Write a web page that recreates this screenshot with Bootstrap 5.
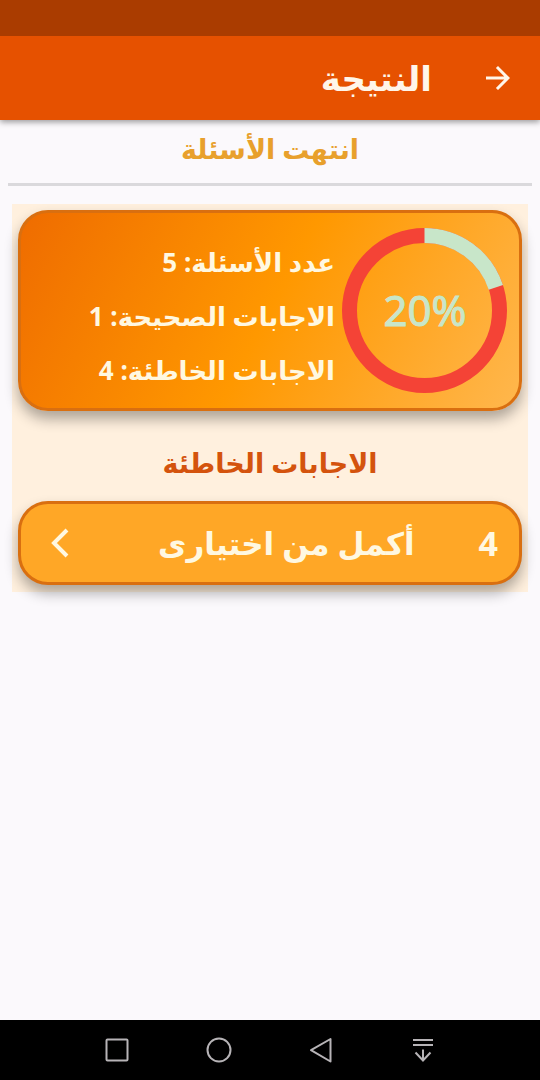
<!DOCTYPE html>
<html lang="ar" dir="rtl">
<head>
<meta charset="utf-8">
<meta name="viewport" content="width=device-width, initial-scale=1">
<title>النتيجة</title>
<link href="https://cdn.jsdelivr.net/npm/bootstrap@5.3.0/dist/css/bootstrap.min.css" rel="stylesheet">
<style>
  body { background: #fbf9fc; font-family: "Noto Sans", "DejaVu Sans", sans-serif; }
  .status-strip { height: 36px; background: #aa3c00; }
  .app-bar { height: 84px; background: #e65100; color: #fff6ea; box-shadow: 0 2px 6px rgba(0,0,0,.4); padding: 0 24px; gap: 48px; clip-path: inset(0 0 -20px 0); }
  .app-bar h1 { font-size: 34px; line-height: 48px; }
  .icon-btn { border: 0; background: none; color: inherit; }
  .done-title { color: #e8a02c; font-size: 27px; line-height: 40px; padding: 9px 0 14px; border-bottom: 3px solid #dad9dc; margin: 0 8px; }
  .result-panel { background: #fff0de; margin: 18px 12px 0; padding: 6px 6px 7px; }
  .tile { border: 3px solid #d96f10; border-radius: 30px; box-shadow: 0 8px 14px rgba(0,0,0,.32); color: #fff8e1; }
  .summary { height: 201px; background: linear-gradient(298deg, #ffb74d, #ff9800 50%, #ef6c00); padding: 0 12px; gap: 7px; }
  .gauge { width: 165px; height: 165px; }
  .gauge text { font-size: 42px; fill: #c8e6c9; stroke: #c8e6c9; stroke-width: 1px; }
  .stat-list { font-size: 26px; line-height: 54px; padding: 10px 0 0; }
  .wrong-title { color: #d4530d; font-size: 27px; line-height: 40px; padding: 32px 0 18px; }
  .answer { height: 84px; background: #ffa726; font-size: 31px; line-height: 48px; padding: 0 21px; gap: 64px; }
  .answer-number { font-size: 34px; }
  .sys-nav { height: 60px; background: #000; color: #b7b4b7; padding: 0 66px; }
</style>
</head>
<body class="d-flex flex-column min-vh-100">
<div class="status-strip"></div>
<header class="app-bar d-flex align-items-center">
  <button type="button" class="icon-btn p-0 d-flex" aria-label="رجوع">
    <svg width="36" height="36" viewBox="0 0 24 24" fill="currentColor"><path d="M12 4l-1.41 1.41L16.17 11H4v2h12.17l-5.58 5.59L12 20l8-8z"/></svg>
  </button>
  <h1 class="m-0 fw-bold">النتيجة</h1>
</header>
<main class="flex-grow-1">
  <h2 class="done-title text-center fw-bold">انتهت الأسئلة</h2>
  <section class="result-panel">
    <div class="tile summary d-flex align-items-center">
      <svg class="gauge flex-shrink-0" viewBox="0 0 165 165" role="img" aria-label="20%">
        <circle cx="82.5" cy="82.5" r="75" fill="none" stroke="#f44336" stroke-width="15"/>
        <circle cx="82.5" cy="82.5" r="75" fill="none" stroke="#c8e6c9" stroke-width="15" pathLength="100" stroke-dasharray="20 80" transform="rotate(-90 82.5 82.5)"/>
        <text x="83" y="98" text-anchor="middle" direction="ltr">20%</text>
      </svg>
      <ul class="stat-list list-unstyled m-0 fw-bold text-nowrap">
        <li>عدد الأسئلة: 5</li>
        <li>الاجابات الصحيحة: 1</li>
        <li>الاجابات الخاطئة: 4</li>
      </ul>
    </div>
    <h3 class="wrong-title m-0 text-center fw-bold">الاجابات الخاطئة</h3>
    <button type="button" class="tile answer w-100 d-flex align-items-center fw-bold">
      <span class="answer-number">4</span>
      <span>أكمل من اختيارى</span>
      <svg class="me-auto flex-shrink-0" width="36" height="36" viewBox="0 0 36 36" fill="none" stroke="currentColor" stroke-width="4"><path d="M25 5 12 18 25 31"/></svg>
    </button>
  </section>
</main>
<nav class="sys-nav d-flex align-items-center justify-content-between" dir="ltr">
  <svg class="mx-auto" width="30" height="30" viewBox="0 0 30 30" fill="none" stroke="currentColor" stroke-width="2"><rect x="4.500" y="4.500" width="21" height="21" rx="1"/></svg>
  <svg class="mx-auto" width="30" height="30" viewBox="0 0 30 30" fill="none" stroke="currentColor" stroke-width="2"><circle cx="15" cy="15" r="11.500"/></svg>
  <svg class="mx-auto" width="30" height="30" viewBox="0 0 30 30" fill="none" stroke="currentColor" stroke-width="2" stroke-linejoin="round"><path d="M24.500 4v22.500L5 15.200z"/></svg>
  <svg class="mx-auto" width="30" height="30" viewBox="0 0 30 30" fill="none" stroke="currentColor" stroke-width="2"><path d="M5 5h20M5 10h20M15 14.500v11M7.500 17.500l7.500 8 7.500-8"/></svg>
</nav>
<script src="https://cdn.jsdelivr.net/npm/bootstrap@5.3.0/dist/js/bootstrap.bundle.min.js"></script>
</body>
</html>
